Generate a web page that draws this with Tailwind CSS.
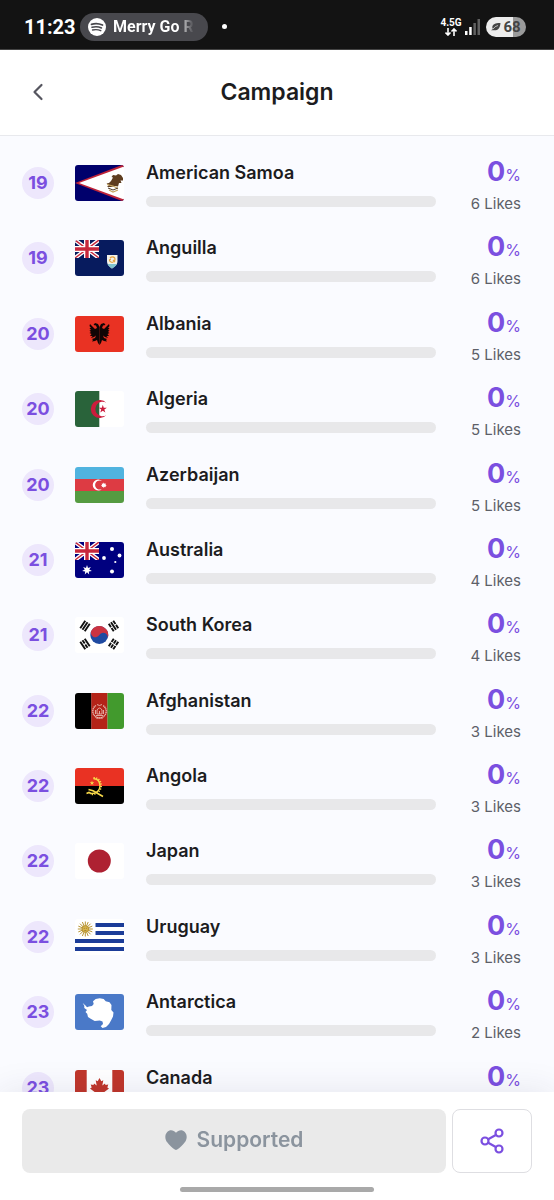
<!DOCTYPE html>
<html lang="en">
<head>
    <meta charset="UTF-8">
    <meta name="viewport" content="width=device-width, initial-scale=1.0">
    <title>Campaign</title>
    <script src="https://cdn.jsdelivr.net/npm/@tailwindcss/browser@4"></script>
</head>
<body class="flex h-screen flex-col overflow-hidden bg-white font-['Inter',sans-serif] text-[#1c1c1e]">
    <!-- Flag artwork -->
    <svg class="hidden" xmlns="http://www.w3.org/2000/svg">
        <symbol id="star5" viewBox="-1 -1 2 2"><path fill="currentColor" d="M0-1 .22-.31H.95L.36.12.59.81 0 .38-.59.81-.36.12-.95-.31H-.22Z" /></symbol>
        <symbol id="union" viewBox="0 0 24 18">
            <path stroke="#fff" stroke-width="4" d="M0 0 24 18M24 0 0 18" />
            <path stroke="#c8283c" stroke-width="1.4" d="M0 0 24 18M24 0 0 18" />
            <path stroke="#fff" stroke-width="6" d="M12 0V18M0 9H24" />
            <path stroke="#c8283c" stroke-width="3.4" d="M12 0V18M0 9H24" />
        </symbol>
        <symbol id="as" viewBox="0 0 49 36">
            <path fill="#00006c" d="M0 0H49V36H0Z" />
            <path fill="#bd2238" d="M0 18 47 0H49V36H47Z" />
            <path fill="#fff" d="M4 18 49 1.500V34.500Z" />
            <path fill="#5e3d20" d="M48 13 46 10 43 9 41 10.500 38 10 36.500 12 38 12.500 36 16 34 18 31.500 18.500 34 20 32 22 36 22 40 21 43 21.500 44 18 46.500 18 45.500 15.500 48 15.500Z" />
            <path fill="none" stroke="#c5a45e" stroke-width="1.200" d="M32 19.500 38 21 43 23.500M34 25 38 27 43 25" />
            <path fill="none" stroke="#4c3926" stroke-width="1" d="M33 23 38 25 43 23" />
        </symbol>
        <symbol id="ai" viewBox="0 0 49 36">
            <path fill="#071b5e" d="M0 0H49V36H0Z" />
            <use href="#union" width="24" height="18" />
            <path fill="#f4f3e9" d="M32 15H42.500V21C42.500 25 39 27 37 28.500 35 27 32 25 32 21Z" />
            <path fill="#81c3cf" d="M32.500 24H42C41 26 38.500 27.500 37 28.500 35.500 27.500 33.500 26 32.500 24Z" />
            <path fill="none" stroke="#e5a443" stroke-width="1.300" d="M35 18C37 16 40 17 40 19S38 23 36 22 34 19 36 19.500M38 20 40 22" />
        </symbol>
        <symbol id="al" viewBox="0 0 49 36">
            <path fill="#e93223" d="M0 0H49V36H0Z" />
            <path id="wing" fill="#100505" d="M24.500 11 23 8 20 7 18.500 9 21 9.500 22 12 20 13 15 8 14.500 10 16 12 14.500 12 16 14 14.500 14.500 16 16 14.500 17 16.500 18 15 20 17.500 20 16 22 19 21 21 19.500 20 22 17 23 18 24 17 25.500 20 25 22 24 23 27 24.500 29Z" />
            <use href="#wing" transform="translate(49 0) scale(-1 1)" />
        </symbol>
        <symbol id="dz" viewBox="0 0 49 36">
            <path fill="#fff" d="M0 0H49V36H0Z" />
            <path fill="#29633a" d="M0 0H24.300V36H0Z" />
            <path fill="#cb1c3c" d="M31.500 12A9 9 0 1 0 31.500 24A7.200 7.200 0 1 1 31.500 12Z" />
            <use href="#star5" x="23.500" y="13.700" width="8.600" height="8.600" color="#cb1c3c" />
        </symbol>
        <symbol id="az" viewBox="0 0 49 36">
            <path fill="#50b3df" d="M0 0H49V12H0Z" />
            <path fill="#dd3b43" d="M0 12H49V24H0Z" />
            <path fill="#559b41" d="M0 24H49V36H0Z" />
            <path fill="#fff" d="M27 14A5.500 5.500 0 1 0 27 22A4.600 4.600 0 1 1 27 14Z" />
            <path fill="#fff" d="m28.800 15.600.7 1.200 1.400-.4-.4 1.300 1.200.6-1.200.6.4 1.300-1.400-.4-.7 1.200-.7-1.200-1.400.4.4-1.300-1.200-.6 1.200-.6-.4-1.300 1.400.4Z" />
        </symbol>
        <symbol id="au" viewBox="0 0 49 36">
            <path fill="#00007f" d="M0 0H49V36H0Z" />
            <use href="#union" width="24" height="18" />
            <path fill="#fff" transform="translate(12 28)" d="M0-5 1-2.100 3.900-3.100 2.200-.5 4.900 1.100 1.800 1.400 2.200 4.500 0 2.300-2.200 4.500-1.800 1.400-4.900 1.100-2.200-.5-3.900-3.100-1-2.100Z" />
            <g fill="#fff"><circle cx="37" cy="7" r="2" /><circle cx="29" cy="16" r="1.900" /><circle cx="44.500" cy="13.500" r="1.900" /><circle cx="40.300" cy="20" r="1.100" /><circle cx="37" cy="29.500" r="2" /></g>
        </symbol>
        <symbol id="kr" viewBox="0 0 49 36">
            <path fill="#fff" d="M0 0H49V36H0Z" />
            <circle cx="24.300" cy="18" r="9" fill="#1f4aa1" />
            <path fill="#cb3341" d="M16.800 13A9 9 0 0 1 31.800 23A4.500 4.500 0 0 0 24.300 18A4.500 4.500 0 0 1 16.800 13Z" transform="rotate(-4 24.300 18)" />
            <g stroke="#111" stroke-width="1.900">
                <path transform="translate(10 9) rotate(34)" d="M-2.700-4.500V4.500M0-4.500V4.500M2.700-4.500V4.500" />
                <path transform="translate(38.500 9) rotate(-34)" d="M-2.700-4.500V-.5M-2.700.5V4.500M0-4.500V4.500M2.700-4.500V-.5M2.700.5V4.500" />
                <path transform="translate(10 27) rotate(-34)" d="M-2.700-4.500V4.500M0-4.500V-.5M0 .5V4.500M2.700-4.500V4.500" />
                <path transform="translate(38.500 27) rotate(34)" d="M-2.700-4.500V-.5M-2.700.5V4.500M0-4.500V-.5M0 .5V4.500M2.700-4.500V-.5M2.700.5V4.500" />
            </g>
        </symbol>
        <symbol id="af" viewBox="0 0 49 36">
            <path d="M0 0H16.500V36H0Z" />
            <path fill="#b42318" d="M16.300 0H32.600V36H16.300Z" />
            <path fill="#429a2d" d="M32.500 0H49V36H32.500Z" />
            <g fill="none" stroke="#e6b7ae">
                <path stroke-width="1.400" stroke-dasharray="1.300 .5" d="M21 12.500A6.700 6.700 0 1 0 28 12.500" />
                <path stroke-width=".9" d="M22 21V17Q24.500 13 27 17V21ZM24.500 21V18M21 22.500H28M22 11.500 24.500 12.500 27 11.500M20.500 17V21M28.500 17V21M21 25H28" />
            </g>
        </symbol>
        <symbol id="ao" viewBox="0 0 49 36">
            <path fill="#e93223" d="M0 0H49V18H0Z" />
            <path d="M0 18H49V36H0Z" />
            <path fill="none" stroke="#f7d849" stroke-width="1.500" d="M18.500 10.800C23 10.500 25 14 25 18S21.500 26 15.500 25.500" />
            <path fill="none" stroke="#f7d849" stroke-width="2" stroke-dasharray="1.200 1.300" d="M18.500 10C24 9.500 26 14 26 18S22 27 15.500 26.300" />
            <path fill="none" stroke="#f7d849" stroke-width="1.600" d="M13.500 21.500 18 22.800 28 28.500M11.500 25.500 14 24.500 16 25.500" />
            <use href="#star5" x="14.500" y="12.500" width="5" height="5" color="#f7d849" />
        </symbol>
        <symbol id="jp" viewBox="0 0 49 36">
            <path fill="#fff" d="M0 0H49V36H0Z" />
            <circle cx="24.300" cy="18" r="11.500" fill="#ae2132" />
        </symbol>
        <symbol id="uy" viewBox="0 0 49 36">
            <path fill="#fff" d="M0 0H49V36H0Z" />
            <path fill="#1b3c98" d="M20.500 4H49V8H20.500ZM20.500 12H49V16H20.500ZM0 20H49V24H0ZM0 28H49V32H0Z" />
            <g stroke="#b79434" stroke-width="1">
                <path d="M10.300 2.500V17.500M2.800 10H17.800M5 4.700 15.600 15.300M15.600 4.700 5 15.300M7.400 3 13.200 17M13.200 3 7.400 17M3.300 7.100 17.300 12.900M17.300 7.100 3.300 12.900" />
                <circle cx="10.300" cy="10" r="3.300" fill="#d9b44a" />
            </g>
            <path fill="none" stroke="#7d642a" stroke-width=".6" d="M8.700 9.300H9.900M10.800 9.300H12M9.300 11.500H11.300" />
        </symbol>
        <symbol id="aq" viewBox="0 0 49 36">
            <path fill="#4a79c8" d="M0 0H49V36H0Z" />
            <path fill="#fff" d="M7.700 9 10.500 11.500 12 13.200 14 12.500 17 12 18.700 10 18 7.300 20.700 5 24.700 4.300 28.700 5 30.700 7.300 34.500 8.300 36.500 11 36.300 16 38.500 18.500 38 22.500 36 26.500 34 30 31 33 27.500 34 25.700 32.300 28 30 27.500 27.500 24.700 26.600 19.700 27 15.700 24.700 13 23 12.200 19.700 10.500 18 12 16 9.300 14 9.300 11.700Z" />
        </symbol>
        <symbol id="ca" viewBox="0 0 49 36">
            <path fill="#fff" d="M0 0H49V36H0Z" />
            <path fill="#c0362b" d="M0 0H11.700V36H0ZM37.300 0H49V36H37.300Z" />
            <path fill="#c0362b" d="M24.500 8 22.700 11.200 20.700 10.200 21.700 15.500 19 13.500 18.500 15 15.700 14.500 16.700 17.500 15 18.500 20.300 22.500 19.700 24.500 24 24V29H25V24L29.300 24.500 28.700 22.500 34 18.500 32.300 17.500 33.300 14.500 30.500 15 30 13.500 27.300 15.500 28.300 10.200 26.300 11.200Z" />
        </symbol>
    </svg>

    <!-- Status bar -->
    <div class="flex h-[50px] shrink-0 items-center border-b border-[#444] bg-[#131313] pt-1 pr-7 pl-6 font-['Roboto',sans-serif] text-white">
        <span class="w-14 text-xl leading-6 font-bold">11:23</span>
        <div class="flex h-7 w-32 items-center gap-[7px] rounded-full bg-[#48484d] pr-3 pl-2">
            <svg class="size-[18px] shrink-0" viewBox="0 0 18 18" fill="none" stroke="#48484d" stroke-linecap="round">
                <circle cx="9" cy="9" r="9" fill="#fff" stroke="none" />
                <path stroke-width="1.800" d="M3.500 6.300Q9 4.500 14.500 7" />
                <path stroke-width="1.500" d="M4 9.300Q9 7.800 13.500 10" />
                <path stroke-width="1.300" d="M4.500 12Q9 10.800 12.800 12.700" />
            </svg>
            <span class="bg-linear-to-r from-white from-80% to-[#48484d] bg-clip-text text-base leading-6 font-bold whitespace-nowrap text-transparent">Merry Go R</span>
        </div>
        <span class="ml-3.5 size-[5px] rounded-full bg-white"></span>
        <div class="ml-auto flex items-center">
            <div class="flex w-5 flex-col items-center">
                <span class="text-[10px] leading-[10px] font-bold">4.5G</span>
                <svg class="h-2 w-3" viewBox="0 0 12 8" fill="none" stroke="#fff" stroke-width="1.600"><path d="M3 0V7M.5 4.500 3 7 5.500 4.500M9 8V1M6.500 3.500 9 1 11.500 3.500" /></svg>
            </div>
            <svg class="mr-1.5 ml-1 h-4 w-[15px]" viewBox="0 0 15 16">
                <path fill="#fff" d="M0 12H2.500V16H0ZM4.200 8H6.700V16H4.200Z" />
                <path fill="#616161" d="M8.400 4H10.900V16H8.400ZM12.500 0H15V16H12.500Z" />
            </svg>
            <div class="flex h-5 w-10 items-center justify-center gap-0.5 rounded-full bg-linear-to-r from-[#ececec] from-67% to-[#9a9a9a] to-67% text-[#444]">
                <svg class="h-2 w-2.5" viewBox="0 0 10 8"><path fill="currentColor" d="M10 0C6 0 2.500.5 1.500 3 1 4.500 1.500 5.500 2 6L0 7.200H3C6 7.500 9 6.500 9.500 0Z" /><path stroke="#ececec" stroke-width=".7" fill="none" d="M2 6Q4 3 7 2.500" /></svg>
                <span class="text-[15px] leading-5 font-bold">68</span>
            </div>
        </div>
    </div>

    <!-- Header -->
    <header class="grid h-[86px] shrink-0 grid-cols-[40px_1fr_40px] items-center border-b border-[#e8e9ed] px-[18px] pb-0.5">
        <button class="flex size-10 items-center justify-center" aria-label="Back">
            <svg class="h-[18px] w-3" viewBox="0 0 12 18" fill="none" stroke="#55555f" stroke-width="2.200" stroke-linecap="round" stroke-linejoin="round"><path d="M9.500 2 2.500 9 9.500 16" /></svg>
        </button>
        <h1 class="text-center text-[23px] leading-8 font-semibold">Campaign</h1>
    </header>

    <!-- Ranking -->
    <main class="relative min-h-0 flex-1 overflow-y-auto bg-[#fafbff] pt-[9px] [scrollbar-width:none]">
        <ol id="ranking" class="grid min-h-[980px] auto-rows-fr px-[22px]"></ol>
    </main>

    <!-- Footer -->
    <footer class="relative z-10 shrink-0 bg-white px-[22px] pt-[17px] pb-2 shadow-[0_0_32px_rgba(40,40,80,0.10)]">
        <div class="flex gap-1.5">
            <button class="flex h-16 flex-1 items-center justify-center gap-2.5 rounded-lg bg-[#eaeaea] pb-0.5 text-[21px] leading-8 font-semibold text-[#8b949e]">
                <svg class="h-5 w-[22px]" viewBox="0 0 22 20" fill="currentColor"><path d="M11 2.800C8.500-.4 4.500-.5 2.200 2-.5 5-.1 9.200 2.200 12.300 4.500 15.500 7.500 18 9.800 19.500Q11 20.300 12.200 19.500C14.500 18 17.500 15.500 19.800 12.300 22.100 9.200 22.500 5 19.800 2 17.500-.5 13.500-.4 11 2.800Z" /></svg>
                Supported
            </button>
            <button class="flex h-16 w-20 items-center justify-center rounded-lg border border-[#dedee2] text-[#7b4fe0]" aria-label="Share">
                <svg class="h-[26px] w-6" viewBox="0 0 24 26" fill="none" stroke="currentColor" stroke-width="2.200"><circle cx="5" cy="13" r="3.500" /><circle cx="19" cy="5" r="3.500" /><circle cx="19" cy="21" r="3.500" /><path d="M8.200 11.200 15.800 7M8.200 14.800 15.800 19" /></svg>
            </button>
        </div>
        <div class="mx-auto mt-3.5 h-[5px] w-[194px] rounded-full bg-[#a9a9a9]"></div>
    </footer>

    <script>
        // rank, flag, country, percent, likes
        const countries = [
            [19, 'as', 'American Samoa', 0, 6],
            [19, 'ai', 'Anguilla', 0, 6],
            [20, 'al', 'Albania', 0, 5],
            [20, 'dz', 'Algeria', 0, 5],
            [20, 'az', 'Azerbaijan', 0, 5],
            [21, 'au', 'Australia', 0, 4],
            [21, 'kr', 'South Korea', 0, 4],
            [22, 'af', 'Afghanistan', 0, 3],
            [22, 'ao', 'Angola', 0, 3],
            [22, 'jp', 'Japan', 0, 3],
            [22, 'uy', 'Uruguay', 0, 3],
            [23, 'aq', 'Antarctica', 0, 2],
            [23, 'ca', 'Canada', 0, 2],
        ];

        document.getElementById('ranking').innerHTML = countries.map(([rank, flag, name, percent, likes]) => `
            <li class="flex items-start pt-[11px]">
                <span class="mt-[11px] flex size-8 shrink-0 items-center justify-center rounded-full bg-[#ede7fc] text-lg font-bold text-[#7b4fe0]">${rank}</span>
                <svg class="mt-[9px] ml-[21px] h-9 w-[49px] shrink-0 rounded-[3px]" viewBox="0 0 49 36" aria-hidden="true"><use href="#${flag}" /></svg>
                <div class="mt-[5px] ml-[22px] flex-1">
                    <h2 class="text-lg leading-6 font-semibold">${name}</h2>
                    <div class="mt-[11px] h-[11px] overflow-hidden rounded-full bg-[#e8e8ea]" role="progressbar" aria-label="${name}" aria-valuenow="${percent}">
                        <div class="h-full bg-[#7b4fe0]" style="width: ${percent}%"></div>
                    </div>
                </div>
                <div class="w-24 pr-[11px] text-right">
                    <p class="flex items-baseline justify-end text-base leading-8 text-[#7b4fe0]"><span class="text-[27px] leading-8 font-bold">${percent}</span>%</p>
                    <p class="text-[15px] leading-[26px] text-[#5d6068]">${likes} Likes</p>
                </div>
            </li>`).join('');
    </script>
</body>
</html>
